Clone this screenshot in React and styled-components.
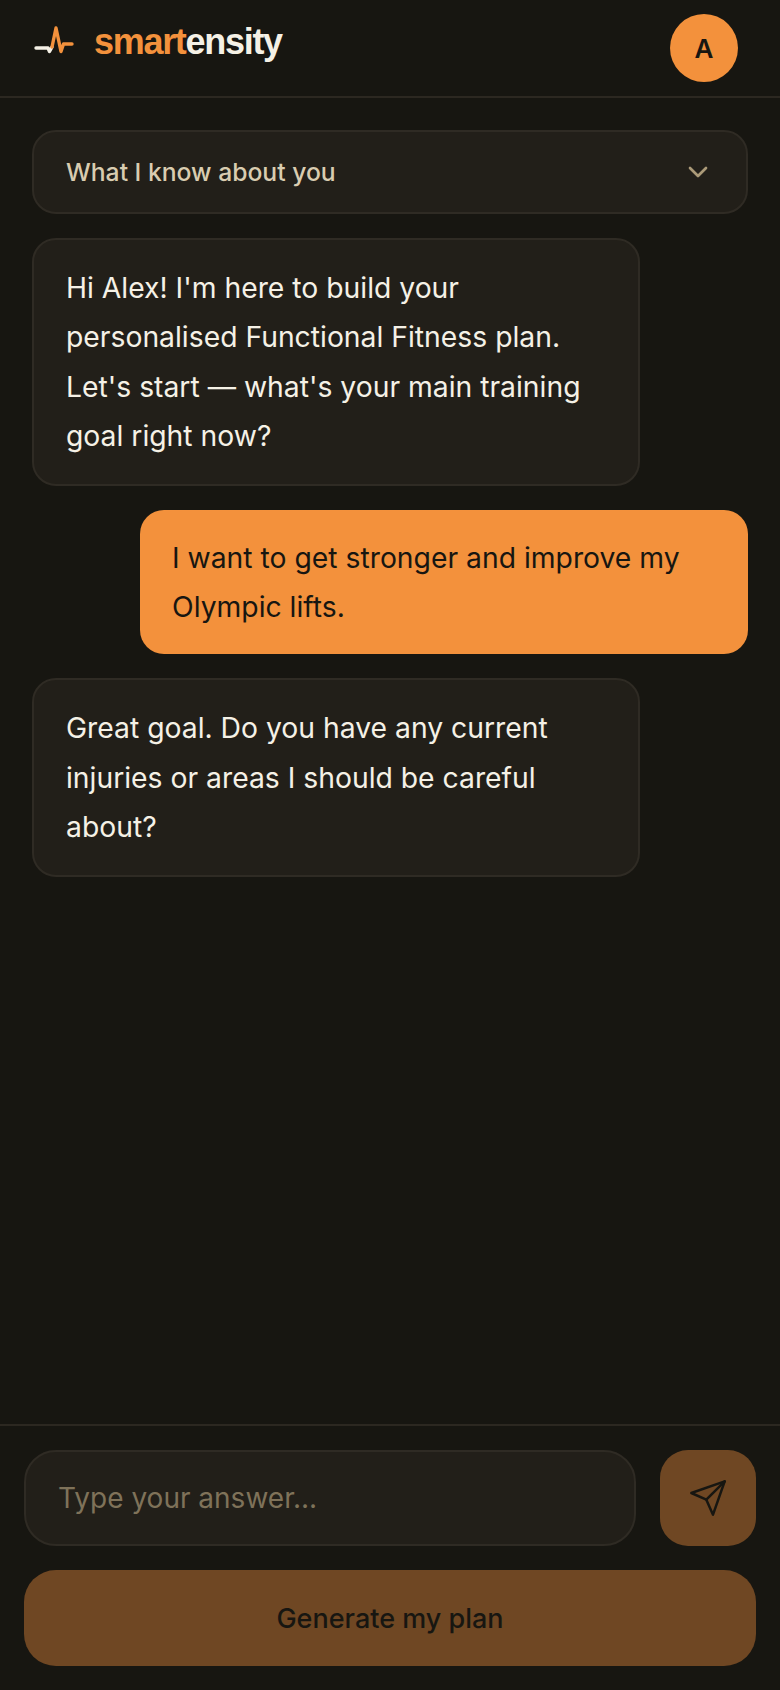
import styled, { createGlobalStyle } from "styled-components";
import { ChevronDown } from "lucide-react";

const GlobalStyle = createGlobalStyle`
  html, body { margin: 0; background: #171611; }
  * { box-sizing: border-box; }
  input::placeholder { color: #7f7259; opacity: 1; }
`;

const Screen = styled.div`
  height: 1690px;
  display: flex;
  flex-direction: column;
  background: #171611;
  font-family: "Inter", "Liberation Sans", sans-serif;
  color: #f5f1e6;
`;

const Header = styled.header`
  height: 98px;
  flex: none;
  display: flex;
  align-items: flex-start;
  justify-content: space-between;
  padding: 14px 42px 0 34px;
  border-bottom: 2px solid #2c2821;
`;

const Brand = styled.div`
  display: flex;
  align-items: center;
  gap: 20px;
  padding-top: 10px;
`;

const Wordmark = styled.span`
  font-family: "Liberation Sans", sans-serif;
  font-size: 36px;
  font-weight: 700;
  letter-spacing: -1.3px;
  line-height: 36px;
  color: #f5f1e6;
  & > b { color: #f3913c; }
`;

const Avatar = styled.div`
  width: 68px;
  height: 68px;
  border-radius: 50%;
  background: #f3913c;
  color: #171611;
  font-size: 26px;
  font-weight: 600;
  display: flex;
  align-items: center;
  justify-content: center;
`;

const Thread = styled.main`
  flex: 1;
  display: flex;
  flex-direction: column;
  gap: 24px;
  padding: 32px 32px 0;
`;

const Disclosure = styled.div`
  height: 84px;
  display: flex;
  align-items: center;
  justify-content: space-between;
  padding: 0 32px;
  background: #221f19;
  border: 2px solid #2f2b24;
  border-radius: 24px;
  font-size: 24.7px;
  font-weight: 500;
  color: #d9ccb0;
  & > svg { color: #ab9a78; }
`;

const Bubble = styled.div`
  width: 608px;
  font-size: 28.3px;
  line-height: 49.4px;
  border-radius: 24px;
  padding: 24px 32px 22px;
  align-self: ${(p) => (p.$mine ? "flex-end" : "flex-start")};
  background: ${(p) => (p.$mine ? "#f3913c" : "#221f19")};
  color: ${(p) => (p.$mine ? "#171611" : "#f5f1e6")};
  border: ${(p) => (p.$mine ? "0" : "2px solid #2f2b24")};
`;

const Footer = styled.footer`
  flex: none;
  display: flex;
  flex-direction: column;
  gap: 24px;
  padding: 24px;
  border-top: 2px solid #2c2821;
`;

const InputRow = styled.div`
  display: flex;
  gap: 24px;
`;

const AnswerInput = styled.input`
  flex: 1;
  min-width: 0;
  height: 96px;
  padding: 0 32px;
  background: #221f19;
  border: 2px solid #2f2b24;
  border-radius: 32px;
  font: 400 28px "Inter", sans-serif;
  color: #f5f1e6;
`;

const SendButton = styled.button`
  width: 96px;
  height: 96px;
  flex: none;
  border: 0;
  border-radius: 28px;
  background: #6f4723;
  color: #171611;
  display: flex;
  align-items: center;
  justify-content: center;
`;

const GenerateButton = styled.button`
  height: 96px;
  border: 0;
  border-radius: 32px;
  background: #6f4723;
  color: #171611;
  font: 500 27px "Inter", sans-serif;
`;

const PulseLogo = () => (
  <svg width="40" height="36" viewBox="0 0 40 36" fill="none" strokeWidth="3.4" strokeLinecap="round" strokeLinejoin="round">
    <path d="M2 24H14L15.5 27.5L18 23" stroke="#f5f1e6" />
    <path d="M18 23L22 4L27 27.5L29.5 20H38" stroke="#f3913c" />
  </svg>
);

const PaperPlane = () => (
  <svg width="40" height="40" viewBox="0 0 24 24" fill="none" stroke="currentColor" strokeWidth="1.5" strokeLinecap="round" strokeLinejoin="round">
    <path d="M22 2L15 22L11 13L2 9L22 2Z" />
    <path d="M22 2L11 13" />
  </svg>
);

export default function App() {
  return (
    <Screen>
      <GlobalStyle />
      <Header>
        <Brand>
          <PulseLogo />
          <Wordmark><b>smart</b>ensity</Wordmark>
        </Brand>
        <Avatar>A</Avatar>
      </Header>
      <Thread>
        <Disclosure>
          What I know about you
          <ChevronDown size={32} strokeWidth={2} />
        </Disclosure>
        <Bubble>Hi Alex! I'm here to build your personalised Functional Fitness plan. Let's start — what's your main training goal right now?</Bubble>
        <Bubble $mine>I want to get stronger and improve my Olympic lifts.</Bubble>
        <Bubble>Great goal. Do you have any current injuries or areas I should be careful about?</Bubble>
      </Thread>
      <Footer>
        <InputRow>
          <AnswerInput placeholder="Type your answer..." />
          <SendButton aria-label="Send"><PaperPlane /></SendButton>
        </InputRow>
        <GenerateButton>Generate my plan</GenerateButton>
      </Footer>
    </Screen>
  );
}
